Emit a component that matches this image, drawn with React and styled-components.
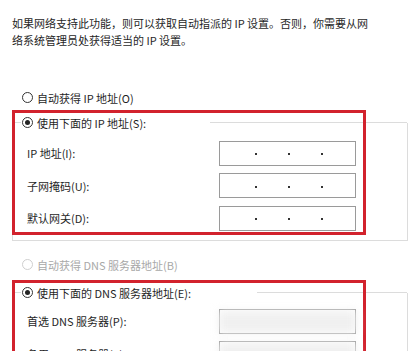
import React from "react";
import styled, { createGlobalStyle } from "styled-components";

const GlobalStyle = createGlobalStyle`
  body {
    margin: 0;
    background: #fff;
    font-family: "Noto Sans CJK SC", "Noto Sans", sans-serif;
    font-size: 11px;
    color: #1f1f1f;
    overflow: hidden;
  }
`;

const ipFields = [
  { id: "ip", label: "IP 地址(I):" },
  { id: "mask", label: "子网掩码(U):" },
  { id: "gw", label: "默认网关(D):" },
];

const dnsFields = [
  { id: "dns1", label: "首选 DNS 服务器(P):" },
  { id: "dns2", label: "备用 DNS 服务器(A):" },
];

function App() {
  return (
    <Page>
      <GlobalStyle />
      <Intro>
        如果网络支持此功能，则可以获取自动指派的 IP 设置。否则，你需要从网
        <br />
        络系统管理员处获得适当的 IP 设置。
      </Intro>

      <RadioRow $top="40px">
        <Radio />
        自动获得 IP 地址(O)
      </RadioRow>

      <Group $top="16.5px">
        <Highlight $height="125px" />
        <Header>
          <Stub />
          <Radio $checked />
          <HeaderLabel>使用下面的 IP 地址(S):</HeaderLabel>
          <Fill $width="197px" />
        </Header>
        <Fields $padTop="9.5px">
          {ipFields.map((f) => (
            <FieldRow key={f.id}>
              <FieldLabel>{f.label}</FieldLabel>
              <IpBox>
                <Dot />
                <Dot />
                <Dot />
              </IpBox>
            </FieldRow>
          ))}
        </Fields>
      </Group>

      <RadioRow $top="15.5px" $disabled>
        <Radio $disabled />
        自动获得 DNS 服务器地址(B)
      </RadioRow>

      <Group $top="19.5px">
        <Highlight $height="120px" />
        <Header>
          <Stub />
          <Radio $checked />
          <HeaderLabel>使用下面的 DNS 服务器地址(E):</HeaderLabel>
          <Fill $width="150px" />
        </Header>
        <Fields $padTop="7.5px">
          {dnsFields.map((f) => (
            <FieldRow key={f.id}>
              <FieldLabel>{f.label}</FieldLabel>
              <BlurBox />
            </FieldRow>
          ))}
        </Fields>
      </Group>
    </Page>
  );
}

export default App;

const Page = styled.div`
  width: 418px;
  box-sizing: border-box;
  padding: 15px 10px 0 12px;
`;

const Intro = styled.p`
  margin: 0;
  line-height: 17px;
  white-space: nowrap;
`;

const RadioRow = styled.div`
  display: flex;
  align-items: center;
  gap: 4px;
  height: 17px;
  margin-top: ${(p) => p.$top || "0"};
  padding-left: 10px;
  color: ${(p) => (p.$disabled ? "#a8a8a8" : "#1f1f1f")};
  white-space: nowrap;
`;

const Radio = styled.span`
  position: relative;
  flex: none;
  width: 11px;
  height: 11px;
  box-sizing: border-box;
  border-radius: 50%;
  border: 1px solid ${(p) => (p.$disabled ? "#cfcfcf" : "#333")};
  background: #fff;

  &::after {
    content: "";
    display: ${(p) => (p.$checked ? "block" : "none")};
    position: absolute;
    left: 2px;
    top: 2px;
    width: 5px;
    height: 5px;
    border-radius: 50%;
    background: #222;
  }
`;

// 分组框（右、下、左边框 + 标题行画上边框）
const Group = styled.div`
  display: flow-root;
  position: relative;
  margin-top: ${(p) => p.$top};
  border: 1px solid #dcdcdc;
  border-top: none;
  padding-bottom: 9px;
`;

// 红色标注框，盖在内容上
const Highlight = styled.div`
  position: absolute;
  left: -1px;
  top: -13px;
  width: 354px;
  height: ${(p) => p.$height};
  box-sizing: border-box;
  border: 3px solid #d2222d;
  pointer-events: none;
`;

const Header = styled.div`
  display: flex;
  align-items: center;
  height: 17px;
  margin-top: -8.5px;
  white-space: nowrap;
`;

const Stub = styled.span`
  width: 8px;
  height: 1px;
  background: #dcdcdc;
  margin-right: 1px;
`;

const HeaderLabel = styled.span`
  margin-left: 4px;
`;

const Fill = styled.span`
  margin-left: auto;
  width: ${(p) => p.$width};
  height: 1px;
  background: #dcdcdc;
`;

const Fields = styled.div`
  display: flex;
  flex-direction: column;
  gap: 7.5px;
  padding-top: ${(p) => p.$padTop};
`;

const FieldRow = styled.div`
  display: flex;
  align-items: center;
  height: 25px;
  padding-left: 14px;
`;

const FieldLabel = styled.span`
  width: 192px;
  white-space: nowrap;
`;

const IpBox = styled.div`
  display: flex;
  align-items: center;
  gap: 31px;
  width: 137px;
  height: 25px;
  box-sizing: border-box;
  padding: 2px 0 0 35px;
  border: 1px solid #9a9a9a;
`;

const Dot = styled.span`
  width: 2px;
  height: 2px;
  background: #333;
`;

const BlurBox = styled.div`
  position: relative;
  width: 137px;
  height: 25px;
  box-sizing: border-box;
  border: 1px solid #8c8c8c;

  &::after {
    content: "";
    position: absolute;
    left: 2px;
    right: 2px;
    top: 4px;
    bottom: 3px;
    background: #f0f0f0;
    box-shadow: 0 0 0 4px #f4f4f4;
    filter: blur(4px);
  }
`;
